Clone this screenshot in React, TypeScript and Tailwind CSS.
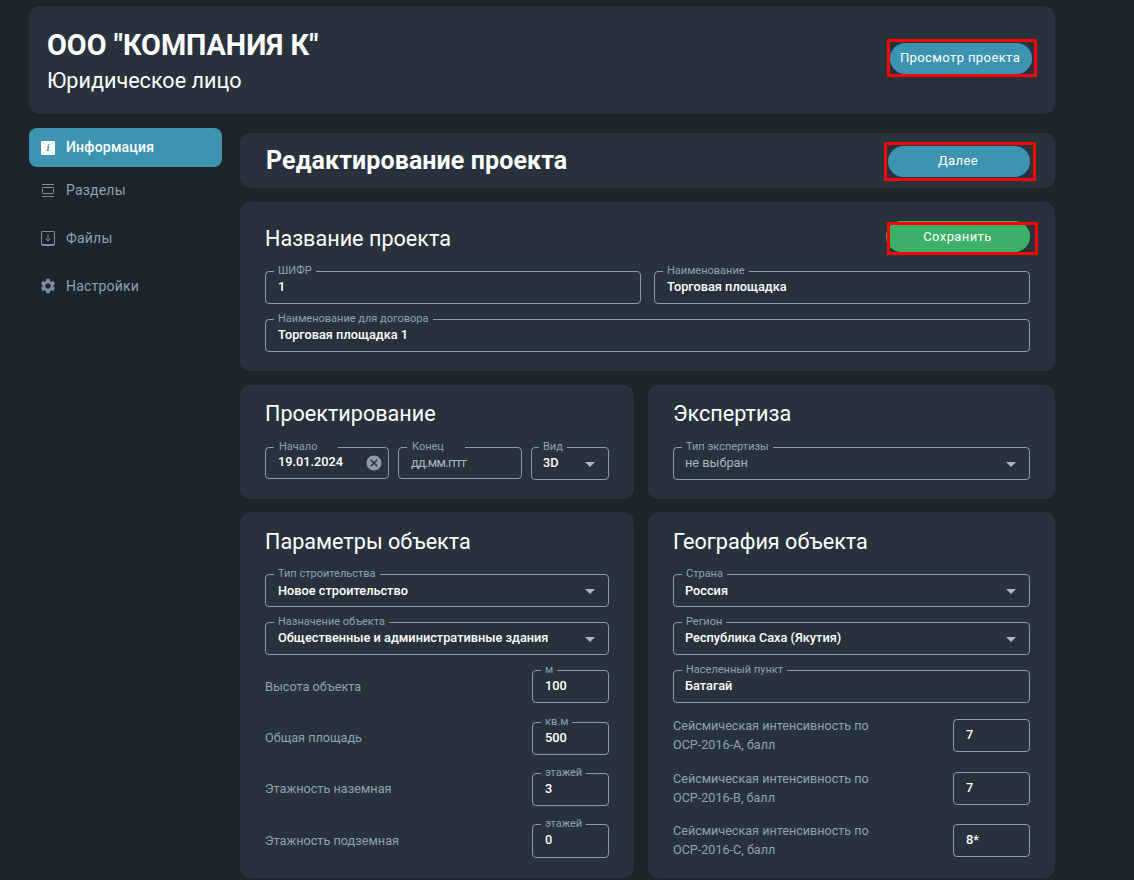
import { MdSettings, MdArrowDropDown, MdCancel } from "react-icons/md";

function Field({
  label,
  value,
  muted,
  arrow,
  className = "",
  labelClass = "",
  valueClass = "",
  children,
}: {
  label?: string;
  value: string;
  muted?: boolean;
  arrow?: boolean;
  className?: string;
  labelClass?: string;
  valueClass?: string;
  children?: React.ReactNode;
}) {
  return (
    <div className={`relative flex items-center border border-[#8b9aa8] rounded-[4px] pl-[12px] pr-[4px] ${className}`}>
      {label && (
        <span
          className={`absolute -top-[8px] left-[8px] bg-[#28323c] px-[4px] text-[11px] leading-[14px] text-[#8ea2b2] whitespace-nowrap ${labelClass}`}
        >
          {label}
        </span>
      )}
      <span
        className={`flex-1 pb-[2px] text-[12.75px] whitespace-nowrap ${
          muted ? "text-[#a9b6c1]" : "font-[480] text-white"
        } ${valueClass}`}
      >
        {value}
      </span>
      {arrow && <MdArrowDropDown className="text-[#a9b6c1] text-[24px] shrink-0 mr-[2px]" />}
      {children}
    </div>
  );
}

function Card({ className = "", children }: { className?: string; children: React.ReactNode }) {
  return <section className={`bg-[#28323c] rounded-[10px] ${className}`}>{children}</section>;
}

function ActionButton({
  label,
  color,
  box,
  className,
}: {
  label: string;
  color: string;
  box: string;
  className: string;
}) {
  return (
    <div className="relative">
      <button className={`block rounded-full text-white text-[13px] tracking-[0.4px] ${color} ${className}`}>
        {label}
      </button>
      <span className={`absolute border-[3px] border-[#ff0000] pointer-events-none ${box}`} />
    </div>
  );
}

function ParamRow({
  label,
  unit,
  value,
  className = "",
  labelPad = "",
  h = "h-[33px]",
}: {
  label: string;
  unit: string;
  value: string;
  className?: string;
  labelPad?: string;
  h?: string;
}) {
  return (
    <div className={`flex items-center justify-between ${className}`}>
      <span className={`text-[12.7px] text-[#8ea2b2] ${labelPad}`}>{label}</span>
      <Field label={unit} value={value} className={`w-[77px] ${h}`} />
    </div>
  );
}

function SeismicRow({ code, value, className = "" }: { code: string; value: string; className?: string }) {
  return (
    <div className={`flex items-center justify-between h-[39px] ${className}`}>
      <span className="pb-[2px] text-[12.6px] leading-[19px] text-[#8ea2b2]">
        Сейсмическая интенсивность по
        <br />
        {code}, балл
      </span>
      <Field value={value} className="w-[77px] h-[33px]" />
    </div>
  );
}

const nav = ["Разделы", "Файлы", "Настройки"];

function NavIcon({ name }: { name: string }) {
  if (name === "Разделы")
    return (
      <svg width="14" height="13" viewBox="0 0 14 13" fill="none" stroke="#7c8d9b" strokeWidth="1">
        <path d="M1 0.5h12M1 12.5h12" />
        <rect x="1.5" y="3.5" width="11" height="6" rx="1" />
      </svg>
    );
  if (name === "Файлы")
    return (
      <svg width="14" height="15" viewBox="0 0 14 15" fill="none" stroke="#7c8d9b" strokeWidth="1">
        <path d="M1.5 0.5h11a1 1 0 0 1 1 1v12a1 1 0 0 1-1 1h-11a1 1 0 0 1-1-1v-12a1 1 0 0 1 1-1z" />
        <path d="M0.5 13.5h13" />
        <path d="M7 3.5v6M4.5 7.5L7 10l2.5-2.5" />
      </svg>
    );
  return <MdSettings className="text-[#7c8d9b] text-[18px] -mx-[2px]" />;
}

export default function App() {
  return (
    <div className="h-[880px] overflow-hidden bg-[#1c252c] pt-[6px] pl-[29px] pr-[79px] font-['Roboto',sans-serif]">
      <Card className="h-[108px] flex items-center justify-between pl-[18px] pr-[23px]">
        <div className="pt-[6px]">
          <h1 className="text-[28.8px] leading-[36px] font-bold text-white">ООО "КОМПАНИЯ К"</h1>
          <p className="text-[21.6px] leading-[36px] text-white">Юридическое лицо</p>
        </div>
        <div className="-mt-[3px]">
          <ActionButton
            label="Просмотр проекта"
            color="bg-[#3c94b1]"
            className="w-[142px] h-[31px] pb-[2px] pr-[2px]"
            box="-left-[3px] -right-[5px] -top-[4px] -bottom-[3px]"
          />
        </div>
      </Card>

      <div className="flex gap-[18px] mt-[14px]">
        <aside className="w-[193px] shrink-0">
          <div className="h-[39px] rounded-[8px] bg-[#3c94b1] flex items-center pl-[12px] gap-[11px]">
            <span className="w-[14px] h-[14px] bg-white rounded-[1px] flex items-center justify-center text-[11px] font-bold italic text-[#3c94b1] font-['Liberation_Serif',serif]">
              i
            </span>
            <span className="text-[14px] tracking-[0.2px] font-medium text-white">Информация</span>
          </div>
          <div className="-mt-[1px]">
            {nav.map((label) => (
              <div key={label} className="h-[48px] flex items-center pl-[12px] gap-[11px]">
                <NavIcon name={label} />
                <span className="text-[14px] tracking-[0.2px] text-[#8ea2b2]">{label}</span>
              </div>
            ))}
          </div>
        </aside>

        <main className="flex-1 flex flex-col gap-[14px] mt-[5px]">
          <Card className="h-[55px] flex items-center justify-between pl-[26px] pr-[25px]">
            <h2 className="text-[25px] tracking-[0.1px] font-bold text-white">Редактирование проекта</h2>
            <div className="mt-[2px]">
              <ActionButton
                label="Далее"
                color="bg-[#3c94b1]"
                className="w-[142px] h-[31px] pb-[2px] pr-[2px]"
                box="-left-[4px] -right-[6px] -top-[4px] -bottom-[4px]"
              />
            </div>
          </Card>

          <Card className="h-[169px] px-[25px]">
            <div className="flex items-center justify-between h-[69px] pt-[3px]">
              <h3 className="text-[21.6px] pt-[2px] text-white">Название проекта</h3>
              <div className="-mt-[4px]">
                <ActionButton
                  label="Сохранить"
                  color="bg-[#3caf69]"
                  className="w-[144px] h-[31px] pt-[1px] pr-[1px]"
                  box="left-[1px] -right-[8px] top-[1px] -bottom-[3px]"
                />
              </div>
            </div>
            <div className="grid grid-cols-2 gap-x-[13px]">
              <Field label="ШИФР" value="1" className="h-[33px]" />
              <Field label="Наименование" value="Торговая площадка" className="h-[33px]" />
            </div>
            <Field label="Наименование для договора" value="Торговая площадка 1" className="h-[33px] mt-[15px]" />
          </Card>

          <div className="grid grid-cols-[394px_407px] gap-x-[14px] gap-y-[13px]">
            <Card className="h-[114px] px-[25px]">
              <h3 className="text-[21.6px] leading-[30px] text-white pt-[14px] h-[62px]">Проектирование</h3>
              <div className="flex gap-[9px]">
                <Field
                  label="Начало"
                  value="19.01.2024"
                  labelClass="pl-[5px] pr-[21px]"
                  valueClass="text-[12.4px]"
                  className="w-[124px] h-[32px]"
                >
                  <MdCancel className="text-[#8b9aa8] text-[18px] shrink-0 mr-[1px]" />
                </Field>
                <Field
                  label="Конец"
                  value="дд.мм.гггг"
                  muted
                  labelClass="pl-[5px] pr-[21px]"
                  valueClass="tracking-[-0.7px] pt-[2px]"
                  className="w-[124px] h-[32px]"
                />
                <Field
                  label="Вид"
                  value="3D"
                  arrow
                  labelClass="-ml-[1px]"
                  valueClass="-ml-[1px]"
                  className="w-[78px] h-[33px]"
                />
              </div>
            </Card>
            <Card className="h-[114px] px-[25px]">
              <h3 className="text-[21.6px] leading-[30px] text-white pt-[14px] h-[62px]">Экспертиза</h3>
              <Field label="Тип экспертизы" value="не выбран" muted arrow valueClass="-ml-[1px]" className="h-[33px]" />
            </Card>

            <Card className="h-[366px] px-[25px]">
              <h3 className="text-[21.6px] leading-[30px] text-white pt-[15px] h-[62px]">Параметры объекта</h3>
              <div className="flex flex-col gap-[15px]">
                <Field label="Тип строительства" value="Новое строительство" arrow valueClass="pt-[2px]" className="h-[33px]" />
                <Field label="Назначение объекта" value="Общественные и административные здания" arrow className="h-[33px]" />
              </div>
              <div className="flex flex-col gap-[18px] mt-[15px]">
                <ParamRow label="Высота объекта" unit="м" value="100" />
                <ParamRow label="Общая площадь" unit="кв.м" value="500" labelPad="pb-[2px]" className="mt-[1px]" />
                <ParamRow label="Этажность наземная" unit="этажей" value="3" labelPad="pb-[2px]" />
                <ParamRow label="Этажность подземная" unit="этажей" value="0" h="h-[34px]" />
              </div>
            </Card>
            <Card className="h-[366px] px-[25px]">
              <h3 className="text-[21.6px] leading-[30px] text-white pt-[15px] h-[62px]">География объекта</h3>
              <div className="flex flex-col gap-[15px]">
                <Field label="Страна" value="Россия" arrow valueClass="pt-[2px] -ml-[1px]" className="h-[33px]" />
                <Field label="Регион" value="Республика Саха (Якутия)" arrow valueClass="-ml-[1px]" className="h-[33px]" />
                <Field label="Населенный пункт" value="Батагай" valueClass="-ml-[1px]" className="h-[33px]" />
              </div>
              <div className="flex flex-col gap-[14px] mt-[13px]">
                <SeismicRow code="ОСР-2016-А" value="7" />
                <SeismicRow code="ОСР-2016-В" value="7" />
                <SeismicRow code="ОСР-2016-С" value="8*" className="-mt-[1px]" />
              </div>
            </Card>
          </div>
        </main>
      </div>
    </div>
  );
}
